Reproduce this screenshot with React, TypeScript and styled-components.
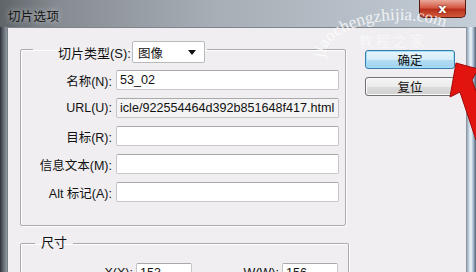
import React from "react";
import styled, { createGlobalStyle } from "styled-components";

const GlobalStyle = createGlobalStyle`
  html, body {
    margin: 0;
    padding: 0;
    overflow: hidden;
    background: #2e3236;
  }
`;

const FONT = `"Liberation Sans", "Noto Sans CJK SC", sans-serif`;

const Window = styled.div`
  position: relative;
  width: 476px;
  height: 272px;
  overflow: hidden;
  display: flex;
  flex-direction: column;
  font-family: ${FONT};
  font-size: 12.5px;
  color: #111;
  background: linear-gradient(to right, #4e5359 0%, #7d848b 6%, #a2aab2 40%, #bcc7d2 100%);
`;

const TitleBar = styled.div`
  height: 27px;
  flex: none;
  display: flex;
  justify-content: space-between;
  align-items: flex-start;
  background: linear-gradient(to right, #5f6469 0%, #858b91 12%, #a7aeb5 45%, #c4ced8 100%);
`;

const Title = styled.div`
  margin: 6px 0 0 8px;
  font-size: 12.5px;
  letter-spacing: 0.3px;
  color: #151515;
  text-shadow: 0 0 6px rgba(255, 255, 255, 0.7);
`;

const CloseButton = styled.div`
  width: 47px;
  height: 18px;
  margin-right: 10px;
  border: 1px solid #5a1a14;
  border-top: none;
  border-radius: 0 0 5px 5px;
  box-sizing: border-box;
  background: linear-gradient(to bottom, #e9a89a 0%, #d45a44 45%, #b8301c 55%, #cf5a3c 100%);
  display: flex;
  align-items: center;
  justify-content: center;
  color: #fff;
  font-weight: bold;
  font-size: 13px;
  font-family: "DejaVu Sans", sans-serif;
  text-shadow: 0 0 2px #4a0a00;
`;

const Body = styled.div`
  flex: 1;
  display: flex;
  min-height: 0;
`;

const LeftFrame = styled.div`
  width: 8px;
  flex: none;
  background: linear-gradient(to right, #2f3338 0%, #5f666d 40%, #8a929a 80%, #6f767d 100%);
`;

const RightFrame = styled.div`
  width: 10px;
  flex: none;
  background: linear-gradient(to right, #7f8a96 0%, #c9d8e6 30%, #eef4fa 50%, #9fb4c8 75%, #51606e 100%);
`;

const Client = styled.div`
  flex: 1;
  display: flex;
  background: #f0eef0;
  border-top: 1px solid #7e858c;
  padding-left: 12px;
`;

const LeftColumn = styled.div`
  width: 329px;
  flex: none;
  display: flex;
  flex-direction: column;
`;

const Group = styled.fieldset<{ $w: number; $top: number }>`
  width: ${(p) => p.$w}px;
  box-sizing: border-box;
  margin: ${(p) => p.$top}px 0 0 0;
  padding: 0 6px 23px 0;
  border: 1px solid #aaa9ab;
  border-radius: 2px;
  box-shadow: inset 1px 1px 0 #fff, 1px 1px 0 #fff;
  min-inline-size: 0;
`;

const SliceLegend = styled.legend`
  margin-left: 12px;
  padding: 5px 2px 0 25px;
  display: flex;
  align-items: center;
  gap: 1px;
  font-size: 13px;
`;

const SizeLegend = styled.legend`
  margin-left: 14px;
  padding: 0 6px;
  font-size: 13px;
  line-height: 16px;
`;

const Combo = styled.div`
  width: 73px;
  height: 22px;
  box-sizing: border-box;
  background: #fff;
  border: 1px solid #b9b9bb;
  border-radius: 2px;
  display: flex;
  align-items: center;
  justify-content: space-between;
  padding: 0 8px 0 5px;
  font-size: 12.5px;
`;

const Caret = styled.span`
  width: 0;
  height: 0;
  border-left: 4px solid transparent;
  border-right: 4px solid transparent;
  border-top: 5px solid #111;
`;

const FormGrid = styled.div`
  display: grid;
  grid-template-columns: 1fr 223px;
  column-gap: 4px;
  row-gap: 8px;
  align-items: center;
  margin-top: 7px;
`;

const SizeGrid = styled.div`
  display: grid;
  grid-template-columns: 112px 56px 84px 56px;
  column-gap: 3px;
  align-items: center;
  margin-top: 12px;
`;

const Label = styled.label`
  text-align: right;
  white-space: nowrap;
`;

const Field = styled.input<{ $muted?: boolean }>`
  height: 20px;
  width: 100%;
  box-sizing: border-box;
  margin: 0;
  padding: 0 3px;
  border: 1px solid #c6c6c8;
  border-top-color: #a9a9ab;
  border-radius: 2px;
  background: ${(p) => (p.$muted ? "#f4f4f4" : "#fff")};
  font-family: ${FONT};
  font-size: 12.6px;
  color: #111;
  outline: none;
`;

const RightColumn = styled.div`
  display: flex;
  flex-direction: column;
  gap: 8px;
  padding: 22px 0 0 16px;
`;

const Button = styled.div<{ $primary?: boolean }>`
  width: 90px;
  height: 19px;
  box-sizing: border-box;
  border-radius: 3px;
  border: 1px solid ${(p) => (p.$primary ? "#3d7bad" : "#707070")};
  background: ${(p) =>
    p.$primary
      ? "linear-gradient(to bottom, #e8f5fc 0%, #d4ecfa 50%, #b4dcf3 51%, #a2d2ee 100%)"
      : "linear-gradient(to bottom, #f4f4f4 0%, #ebebeb 50%, #dcdcdc 51%, #d0d0d0 100%)"};
  box-shadow: inset 0 0 0 1px ${(p) => (p.$primary ? "#9fe0f7" : "#fcfcfc")};
  display: flex;
  align-items: center;
  justify-content: center;
  font-size: 12.5px;
  color: #111;
`;

const Overlay = styled.svg`
  position: absolute;
  left: 0;
  top: 0;
  pointer-events: none;
`;

export default function App() {
  return (
    <>
      <GlobalStyle />
      <Window>
        <TitleBar>
          <Title>切片选项</Title>
          <CloseButton>x</CloseButton>
        </TitleBar>
        <Body>
          <LeftFrame />
          <Client>
            <LeftColumn>
              <Group $w={326} $top={8}>
                <SliceLegend>
                  <span>切片类型(S):</span>
                  <Combo>
                    <span>图像</span>
                    <Caret />
                  </Combo>
                </SliceLegend>
                <FormGrid>
                  <Label>名称(N):</Label>
                  <Field defaultValue="53_02" readOnly />
                  <Label>URL(U):</Label>
                  <Field $muted defaultValue="icle/922554464d392b851648f417.html" readOnly />
                  <Label>目标(R):</Label>
                  <Field readOnly />
                  <Label>信息文本(M):</Label>
                  <Field readOnly />
                  <Label>Alt 标记(A):</Label>
                  <Field readOnly />
                </FormGrid>
              </Group>
              <Group $w={329} $top={9}>
                <SizeLegend>尺寸</SizeLegend>
                <SizeGrid>
                  <Label>X(X):</Label>
                  <Field defaultValue="153" readOnly />
                  <Label>W(W):</Label>
                  <Field defaultValue="156" readOnly />
                </SizeGrid>
              </Group>
            </LeftColumn>
            <RightColumn>
              <Button $primary>确定</Button>
              <Button>复位</Button>
            </RightColumn>
          </Client>
          <RightFrame />
        </Body>

        <Overlay width="476" height="272" viewBox="0 0 476 272">
          <defs>
            <path id="wm-arc" d="M 324 58 A 76 38 0 0 1 476 58" />
          </defs>
          <text
            fill="#ffffff"
            fillOpacity="0.8"
            fontFamily='"Liberation Serif", serif'
            fontSize="17"
          >
            <textPath href="#wm-arc">jiaochengzhijia.com</textPath>
          </text>
          <text
            x="359"
            y="46"
            fill="#ffffff"
            fillOpacity="0.55"
            fontFamily='"Noto Sans CJK SC", sans-serif'
            fontSize="14"
            letterSpacing="3"
          >
            教程之家
          </text>
          <polygon
            points="456,63 478,69 472,80 490,130 476,140 460,92 450,97"
            fill="#e2140f"
            stroke="#a00a08"
            strokeWidth="1"
          />
        </Overlay>
      </Window>
    </>
  );
}
